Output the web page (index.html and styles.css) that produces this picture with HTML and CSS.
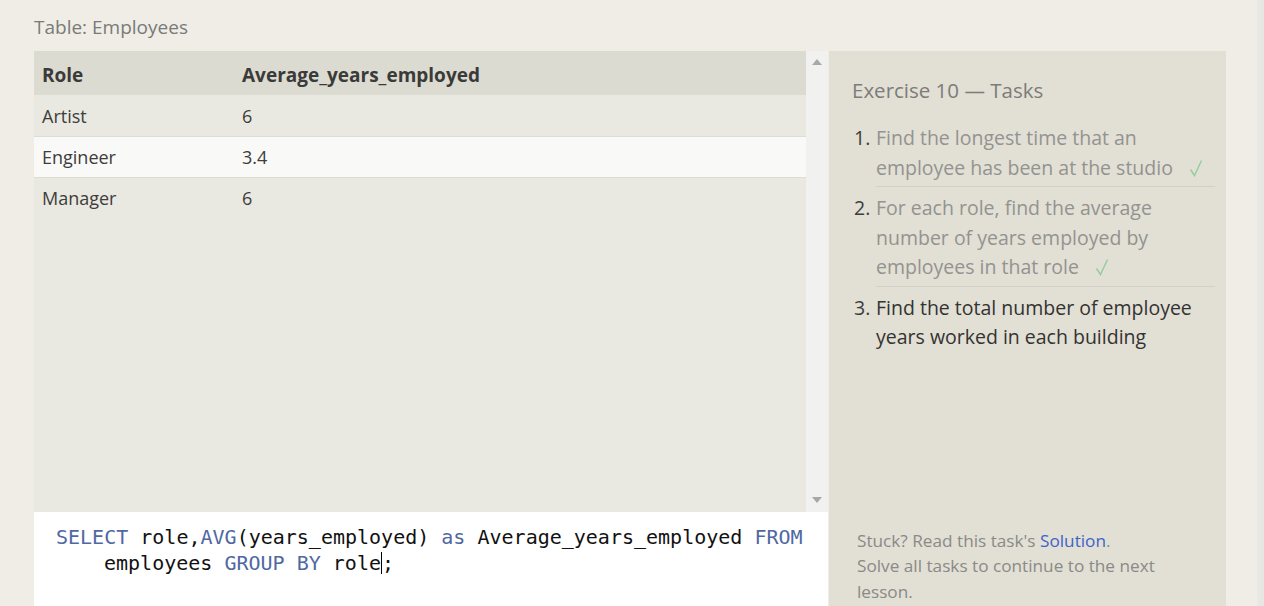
FILE: index.html
```html
<!DOCTYPE html>
<html>
<head>
<meta charset="utf-8">
<link rel="stylesheet" href="styles.css">
</head>
<body>
<div class="page">
  <div class="main">
    <div class="left">
      <div class="caption">Table: Employees</div>
      <div class="results">
        <div class="table-wrap">
          <table class="grid">
            <thead>
              <tr><th class="c1">Role</th><th>Average_years_employed</th></tr>
            </thead>
            <tbody>
              <tr><td class="c1">Artist</td><td>6</td></tr>
              <tr class="alt"><td class="c1">Engineer</td><td>3.4</td></tr>
              <tr><td class="c1">Manager</td><td>6</td></tr>
            </tbody>
          </table>
        </div>
        <div class="scrollbar">
          <svg class="arrow" width="10" height="6" viewBox="0 0 10 6"><path d="M0 6 L5 0 L10 6 Z" fill="#a8a8a6"/></svg>
          <svg class="arrow" width="10" height="6" viewBox="0 0 10 6"><path d="M0 0 L5 6 L10 0 Z" fill="#a8a8a6"/></svg>
        </div>
      </div>
      <div class="editor">
        <div class="code-line"><span class="kw">SELECT</span> role,<span class="kw">AVG</span>(years_employed) <span class="kw">as</span> Average_years_employed <span class="kw">FROM</span></div>
        <div class="code-line wrap">employees <span class="kw">GROUP</span> <span class="kw">BY</span> role<span class="cursor"></span>;</div>
      </div>
    </div>
    <div class="panel">
      <div class="tasks">
        <h2 class="title">Exercise 10 — Tasks</h2>
        <ol class="task-list">
          <li class="task done"><span class="num">1.</span><span class="text">Find the longest time that an employee has been at the studio<svg class="check" width="14" height="18" viewBox="0 0 14 18"><path d="M1.5 10.5 L5.5 16.5 L12.5 1.5" fill="none" stroke="#93cd9e" stroke-width="1.4"/></svg></span></li>
          <li class="task done"><span class="num">2.</span><span class="text">For each role, find the average number of years employed by employees in that role<svg class="check" width="14" height="18" viewBox="0 0 14 18"><path d="M1.5 10.5 L5.5 16.5 L12.5 1.5" fill="none" stroke="#93cd9e" stroke-width="1.4"/></svg></span></li>
          <li class="task current"><span class="num">3.</span><span class="text last">Find the total number of employee years worked in each building</span></li>
        </ol>
      </div>
      <div class="footer">
        <p>Stuck? Read this task's <a href="#" class="link">Solution</a>.</p>
        <p>Solve all tasks to continue to the next lesson.</p>
      </div>
    </div>
  </div>
  <div class="edge"></div>
</div>
</body>
</html>
```

FILE: styles.css
```css
* { box-sizing: border-box; }
html, body { margin: 0; padding: 0; }
body {
  background: #efede6;
  font-family: "Open Sans", "Noto Sans", sans-serif;
  height: 606px;
  overflow: hidden;
}
.page {
  display: flex;
  height: 606px;
}
.main {
  display: flex;
  flex: 1;
  padding-left: 34px;
  gap: 1px;
}
.left {
  width: 794px;
  display: flex;
  flex-direction: column;
}
.caption {
  flex: none;
  height: 51px;
  padding-top: 12px;
  font-size: 19px;
  line-height: 30px;
  color: #7a7a78;
}
.results {
  flex: none;
  display: flex;
  height: 461px;
  background: #e9e8e1;
}
.table-wrap {
  flex: 1;
}
.grid {
  width: 100%;
  border-collapse: collapse;
  font-size: 18px;
  color: #3d3d3b;
}
.grid th {
  background: #dcdbd1;
  text-align: left;
  font-weight: 700;
  font-size: 19px;
  height: 44px;
  padding: 3px 8px 0;
  color: #3a3a38;
}
.grid td {
  height: 41px;
  padding: 1px 8px 0;
  border-top: 1px solid #dedcd6;
}
.grid .c1 { width: 200px; }
.grid tbody tr:first-child td { border-top: none; }
.grid tr.alt td { background: #f9f9f8; }
.scrollbar {
  width: 22px;
  background: #f1f1ef;
  display: flex;
  flex-direction: column;
  justify-content: space-between;
  align-items: center;
  padding: 8px 0 9px;
}
.editor {
  flex: 1;
  min-height: 0;
  background: #ffffff;
  padding: 12px 0 0 22px;
  font-family: "DejaVu Sans Mono", "Liberation Mono", monospace;
  font-size: 20px;
  line-height: 26px;
  color: #111;
}
.code-line {
  white-space: pre;
}
.code-line.wrap { padding-left: 48px; }
.kw { color: #4f68a3; }
.cursor {
  display: inline-block;
  width: 1px;
  height: 22px;
  background: #000;
  vertical-align: -4px;
}
.panel {
  width: 397px;
  margin-top: 51px;
  background: #e2dfd5;
  display: flex;
  flex-direction: column;
  justify-content: space-between;
  padding: 24px 11px 2px 23px;
  box-shadow: 1px 0 0 #f3f1ea, 2px 0 0 #f3f1ea;
}
.title {
  margin: 0;
  font-size: 20.5px;
  font-weight: 400;
  line-height: 30px;
  color: #7c7c7a;
}
.task-list {
  list-style: none;
  margin: 18px 0 0;
  padding: 0;
  font-size: 19.5px;
  line-height: 29.5px;
}
.task {
  display: flex;
  margin-bottom: 6px;
}
.num {
  width: 24px;
  flex: none;
  color: #3d3d3b;
  padding-left: 2px;
}
.text {
  flex: 1;
  padding-bottom: 4px;
  border-bottom: 1px solid #d3d0c7;
}
.text.last { border-bottom: none; }
.done .text { color: #939390; }
.current .text { color: #333331; }
.check {
  display: inline-block;
  margin-left: 16px;
  vertical-align: -2px;
}
.footer {
  padding-left: 5px;
  padding-right: 40px;
  font-size: 17.2px;
  line-height: 25.5px;
  color: #8a8a87;
}
.footer p { margin: 0; }
.link { color: #3e63c9; text-decoration: none; }
.edge {
  width: 38px;
  background: linear-gradient(to right, #efede6 0, #efede6 31px, #e9e8e4 31px, #e6e6e4 100%);
}
```
